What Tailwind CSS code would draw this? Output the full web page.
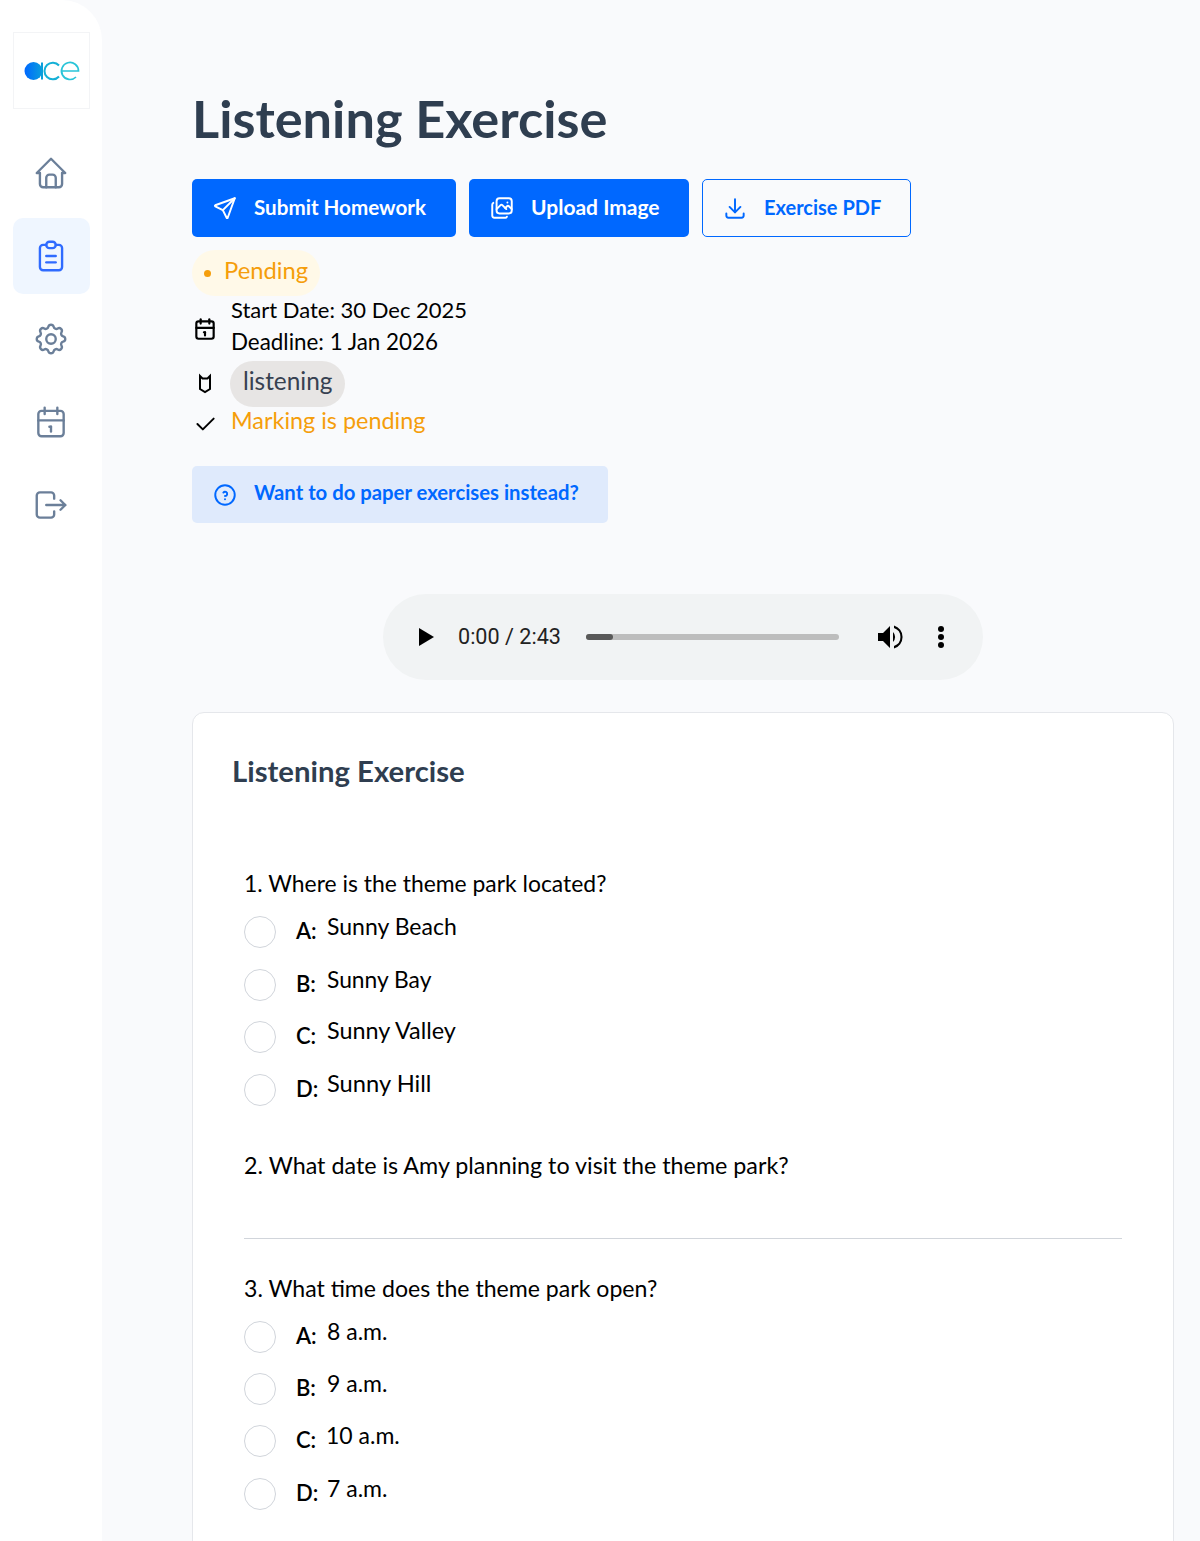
<!DOCTYPE html>
<html lang="en">

<head>
    <meta charset="utf-8">
    <meta name="viewport" content="width=device-width, initial-scale=1">
    <title>Listening Exercise</title>
    <script src="https://cdn.jsdelivr.net/npm/@tailwindcss/browser@4"></script>
</head>

<body class="h-[1541px] overflow-hidden bg-[#f9fafc] font-['Lato',sans-serif] text-black">
    <div class="flex h-full">
        <!-- Sidebar -->
        <aside class="w-[102px] shrink-0 bg-white rounded-tr-[40px] pt-8 pl-[13px] pr-[12px]">
            <div class="h-[77px] border border-[#f3f4f6] flex items-center justify-center">
                <svg width="56" height="22" viewBox="0 0 56 22" fill="none">
                    <defs>
                        <linearGradient id="logoA" x1="0" x2="1" y1="0" y2="0">
                            <stop offset="0" stop-color="#0068ff" />
                            <stop offset="1" stop-color="#0a9fdc" />
                        </linearGradient>
                    </defs>
                    <circle cx="9.500" cy="11" r="9" fill="url(#logoA)" />
                    <path d="M17 2.500h2v17h-2z" fill="#0a9fdc" />
                    <path d="M35 5.500a8.300 8.300 0 1 0 0 11" stroke="#14b0d6" stroke-width="2" />
                    <path d="M37 11h17.500a8.500 8.500 0 1 0 -2.500 6" stroke="#29c4d8" stroke-width="1.700" />
                </svg>
            </div>
            <nav class="mt-[26px] flex flex-col gap-[7px] text-[#6b7f99]">
                <a class="h-[76px] pr-px flex items-center justify-center">
                    <svg class="w-[38px] h-[38px]" viewBox="0 0 24 24" fill="none" stroke="currentColor" stroke-width="1.5" stroke-linecap="round" stroke-linejoin="round"><path d="M5 12l-2 0l9 -9l9 9l-2 0" /><path d="M5 12v7a2 2 0 0 0 2 2h10a2 2 0 0 0 2 -2v-7" /><path d="M9 21v-6a2 2 0 0 1 2 -2h2a2 2 0 0 1 2 2v6" /></svg>
                </a>
                <a class="h-[76px] pr-px flex items-center justify-center rounded-[10px] bg-[#eff6ff] text-[#2f6bff]">
                    <svg class="w-[38px] h-[38px]" viewBox="0 0 24 24" fill="none" stroke="currentColor" stroke-width="1.5" stroke-linecap="round" stroke-linejoin="round"><path d="M9 5h-2a2 2 0 0 0 -2 2v12a2 2 0 0 0 2 2h10a2 2 0 0 0 2 -2v-12a2 2 0 0 0 -2 -2h-2" /><path d="M9 5a2 2 0 0 1 2 -2h2a2 2 0 0 1 2 2v0a2 2 0 0 1 -2 2h-2a2 2 0 0 1 -2 -2z" /><path d="M9 12h6" /><path d="M9 16h6" /></svg>
                </a>
                <a class="h-[76px] pr-px flex items-center justify-center">
                    <svg class="w-[38px] h-[38px]" viewBox="0 0 24 24" fill="none" stroke="currentColor" stroke-width="1.5" stroke-linecap="round" stroke-linejoin="round"><path d="M10.325 4.317c.426 -1.756 2.924 -1.756 3.35 0a1.724 1.724 0 0 0 2.573 1.066c1.543 -.94 3.31 .826 2.37 2.37a1.724 1.724 0 0 0 1.065 2.572c1.756 .426 1.756 2.924 0 3.35a1.724 1.724 0 0 0 -1.066 2.573c.94 1.543 -.826 3.31 -2.37 2.37a1.724 1.724 0 0 0 -2.572 1.065c-.426 1.756 -2.924 1.756 -3.35 0a1.724 1.724 0 0 0 -2.573 -1.066c-1.543 .94 -3.31 -.826 -2.37 -2.37a1.724 1.724 0 0 0 -1.065 -2.572c-1.756 -.426 -1.756 -2.924 0 -3.35a1.724 1.724 0 0 0 1.066 -2.573c-.94 -1.543 .826 -3.31 2.37 -2.37c1 .608 2.296 .07 2.572 -1.065z" /><path d="M9 12a3 3 0 1 0 6 0a3 3 0 0 0 -6 0" /></svg>
                </a>
                <a class="h-[76px] pr-px flex items-center justify-center">
                    <svg class="w-[38px] h-[38px]" viewBox="0 0 24 24" fill="none" stroke="currentColor" stroke-width="1.5" stroke-linecap="round" stroke-linejoin="round"><path d="M4 7a2 2 0 0 1 2 -2h12a2 2 0 0 1 2 2v12a2 2 0 0 1 -2 2h-12a2 2 0 0 1 -2 -2z" /><path d="M16 3v4" /><path d="M8 3v4" /><path d="M4 11h16" /><path d="M11 15h1" /><path d="M12 15v3" /></svg>
                </a>
                <a class="h-[76px] pr-px flex items-center justify-center">
                    <svg class="w-[38px] h-[38px]" viewBox="0 0 24 24" fill="none" stroke="currentColor" stroke-width="1.5" stroke-linecap="round" stroke-linejoin="round"><path d="M14 8v-2a2 2 0 0 0 -2 -2h-7a2 2 0 0 0 -2 2v12a2 2 0 0 0 2 2h7a2 2 0 0 0 2 -2v-2" /><path d="M9 12h12l-3 -3" /><path d="M18 15l3 -3" /></svg>
                </a>
            </nav>
        </aside>

        <!-- Main -->
        <main class="flex-1 min-w-0 pl-[90px] pr-[26px] pt-[88px]">
            <h1 class="h-[64px] leading-[60px] text-[52.3px] font-bold text-[#2f3e50]">Listening Exercise</h1>

            <div class="mt-[27px] flex gap-[13px] font-bold">
                <button class="w-[264px] h-[58px] bg-[#0068ff] text-white text-[20.6px] rounded-[5px] flex items-center pl-[20px] gap-[16px]">
                    <svg class="w-[26px] h-[26px]" viewBox="0 0 24 24" fill="none" stroke="currentColor" stroke-width="1.8" stroke-linecap="round" stroke-linejoin="round"><path d="M10 14l11 -11" /><path d="M21 3l-6.500 18a.55 .55 0 0 1 -1 0l-3.500 -7l-7 -3.500a.55 .55 0 0 1 0 -1l18 -6.500" /></svg>
                    <span class="pb-[2px]">Submit Homework</span>
                </button>
                <button class="w-[220px] h-[58px] bg-[#0068ff] text-white text-[21px] rounded-[5px] flex items-center pl-[20px] gap-[16px]">
                    <svg class="w-[26px] h-[26px]" viewBox="0 0 24 24" fill="none" stroke="currentColor" stroke-width="1.8" stroke-linecap="round" stroke-linejoin="round"><path d="M7 5.667a2.667 2.667 0 0 1 2.667 -2.667h8.666a2.667 2.667 0 0 1 2.667 2.667v8.666a2.667 2.667 0 0 1 -2.667 2.667h-8.666a2.667 2.667 0 0 1 -2.667 -2.667z" /><path d="M4.012 7.260a2.005 2.005 0 0 0 -1.012 1.737v10c0 1.100 .9 2 2 2h10c.75 0 1.158 -.385 1.500 -1" /><path d="M17 7h.01" /><path d="M7 13l3.644 -3.644a1.210 1.210 0 0 1 1.712 0l3.644 3.644" /><path d="M15 12l1.644 -1.644a1.210 1.210 0 0 1 1.712 0l2.644 2.644" /></svg>
                    <span class="pb-[2px]">Upload Image</span>
                </button>
                <button class="w-[209px] h-[58px] border border-[#0068ff] text-[#0068ff] text-[20px] rounded-[5px] flex items-center pl-[19px] gap-[16px]">
                    <svg class="w-[26px] h-[26px]" viewBox="0 0 24 24" fill="none" stroke="currentColor" stroke-width="1.8" stroke-linecap="round" stroke-linejoin="round"><path d="M4 17v2a2 2 0 0 0 2 2h12a2 2 0 0 0 2 -2v-2" /><path d="M7 11l5 5l5 -5" /><path d="M12 4l0 12" /></svg>
                    <span class="pb-[2px]">Exercise PDF</span>
                </button>
            </div>

            <div class="mt-[13px] w-[128px] h-[46px] rounded-full bg-[#fff9e8] flex items-center pl-[12px] text-[23.8px] text-[#f59e0b]">
                <span class="w-[7px] h-[7px] rounded-full bg-[#f59e0b] mr-[13px]"></span><span class="pb-[4px]">Pending</span>
            </div>

            <div class="-mt-[2px] flex items-center leading-[32px]">
                <svg class="w-[26px] h-[26px] shrink-0 mr-[13px] mt-[5px]" viewBox="0 0 24 24" fill="none" stroke="currentColor" stroke-width="2" stroke-linecap="round" stroke-linejoin="round"><path d="M4 7a2 2 0 0 1 2 -2h12a2 2 0 0 1 2 2v12a2 2 0 0 1 -2 2h-12a2 2 0 0 1 -2 -2z" /><path d="M16 3v4" /><path d="M8 3v4" /><path d="M4 11h16" /><path d="M11 15h1" /><path d="M12 15v3" /></svg>
                <div>
                    <p class="text-[22px]">Start Date: 30 Dec 2025</p>
                    <p class="text-[22.4px]">Deadline: 1 Jan 2026</p>
                </div>
            </div>

            <div class="mt-[3px] flex items-center">
                <svg class="w-[26px] h-[26px] shrink-0 mr-[12px] mb-[2px]" viewBox="0 0 26 26" fill="none" stroke="currentColor" stroke-width="2"><path d="M8 6l2.500 2.500h5l2.500 -2.500v13l-5 3l-5 -3z" /></svg>
                <span class="h-[46px] w-[115px] pl-[13px] rounded-full bg-[#e7e5e4] text-[#374151] text-[24.4px] flex items-center"><span class="pb-[5px]">listening</span></span>
            </div>

            <div class="-mt-[2px] h-[32px] flex items-center text-[23.4px] leading-[32px] text-[#f59e0b]">
                <svg class="w-[26px] h-[26px] shrink-0 mr-[13px] mt-[5px] text-black" viewBox="0 0 24 24" fill="none" stroke="currentColor" stroke-width="1.8" stroke-linecap="round" stroke-linejoin="round"><path d="M5 12l5 5l10 -10" /></svg>
                <span class="pb-[2px]">Marking is pending</span>
            </div>

            <button class="mt-[29px] w-[416px] h-[57px] rounded-[5px] bg-[#dfeafc] text-[#0068ff] text-[20.3px] font-bold flex items-center pl-[20px] gap-[16px]">
                <svg class="w-[26px] h-[26px]" viewBox="0 0 24 24" fill="none" stroke="currentColor" stroke-width="1.8" stroke-linecap="round" stroke-linejoin="round"><path d="M3 12a9 9 0 1 0 18 0a9 9 0 1 0 -18 0" /><path d="M12 16v.01" /><path d="M12 13a2 2 0 0 0 .914 -3.782a1.980 1.980 0 0 0 -2.414 .483" /></svg>
                <span class="pb-[5px]">Want to do paper exercises instead?</span>
            </button>

            <!-- Audio player -->
            <div class="mt-[71px] mx-auto w-[600px] h-[86px] rounded-full bg-[#f1f3f4] flex items-center relative">
                <svg class="ml-[32px] w-[22px] h-[22px]" viewBox="0 0 22 22" fill="black"><path d="M4 2l15 9l-15 9z" /></svg>
                <span class="ml-[21px] font-['Roboto',sans-serif] text-[21.6px] text-[#222]">0:00 / 2:43</span>
                <div class="ml-[25px] w-[253px] h-[6px] rounded-full bg-[#bdbdbd]">
                    <div class="w-[27px] h-[6px] rounded-full bg-[#595959]"></div>
                </div>
                <svg class="ml-[38px] w-[26px] h-[26px]" viewBox="0 0 26 26" fill="black"><path d="M1 9h5l7 -7v22l-7 -7h-5z" /><path d="M16 8a7 7 0 0 1 0 10z" /><path d="M17 1.500a12 12 0 0 1 0 23v-2.500a9.500 9.500 0 0 0 0 -18z" /></svg>
                <svg class="ml-[34px] w-[8px] h-[24px]" viewBox="0 0 8 24" fill="black"><circle cx="4" cy="4" r="3" /><circle cx="4" cy="12" r="3" /><circle cx="4" cy="20" r="3" /></svg>
            </div>

            <!-- Exercise card -->
            <section class="mt-[32px] h-[900px] bg-white border border-[#e5e7eb] rounded-[12px] pt-[38px] px-[51px]">
                <h2 class="-ml-[12px] h-[41px] leading-[40px] text-[29.3px] font-bold text-[#2f3e50]">Listening Exercise</h2>

                <p class="mt-[75px] h-[33px] leading-[33px] text-[22.9px]">1. Where is the theme park located?</p>
                <div class="mt-[16px] h-[32px] flex items-center"><span class="w-8 h-8 rounded-full border border-[#d1d5db] bg-white"></span><span class="ml-[20px] w-[31px] pb-1 text-[22px] font-semibold">A:</span><span class="pb-3 text-[23px]">Sunny Beach</span></div>
                <div class="mt-[21px] h-[32px] flex items-center"><span class="w-8 h-8 rounded-full border border-[#d1d5db] bg-white"></span><span class="ml-[20px] w-[31px] pb-1 text-[22px] font-semibold">B:</span><span class="pb-3 text-[22.8px]">Sunny Bay</span></div>
                <div class="mt-[20px] h-[32px] flex items-center"><span class="w-8 h-8 rounded-full border border-[#d1d5db] bg-white"></span><span class="ml-[20px] w-[31px] pb-1 text-[22px] font-semibold">C:</span><span class="pb-3 text-[23.4px]">Sunny Valley</span></div>
                <div class="mt-[21px] h-[32px] flex items-center"><span class="w-8 h-8 rounded-full border border-[#d1d5db] bg-white"></span><span class="ml-[20px] w-[31px] pb-1 text-[22px] font-semibold">D:</span><span class="pb-3 text-[23.7px]">Sunny Hill</span></div>

                <p class="mt-[43px] h-[33px] leading-[33px] text-[23.3px]">2. What date is Amy planning to visit the theme park?</p>
                <div class="mt-[56px] border-t border-[#d1d5db]"></div>

                <p class="mt-[33px] h-[33px] leading-[33px] text-[23.1px]">3. What time does the theme park open?</p>
                <div class="mt-[16px] h-[32px] flex items-center"><span class="w-8 h-8 rounded-full border border-[#d1d5db] bg-white"></span><span class="ml-[20px] w-[31px] pb-1 text-[22px] font-semibold">A:</span><span class="pb-3 text-[23px]">8 a.m.</span></div>
                <div class="mt-[20px] h-[32px] flex items-center"><span class="w-8 h-8 rounded-full border border-[#d1d5db] bg-white"></span><span class="ml-[20px] w-[31px] pb-1 text-[22px] font-semibold">B:</span><span class="pb-3 text-[23px]">9 a.m.</span></div>
                <div class="mt-[20px] h-[32px] flex items-center"><span class="w-8 h-8 rounded-full border border-[#d1d5db] bg-white"></span><span class="ml-[20px] w-[31px] pb-1 text-[22px] font-semibold">C:</span><span class="pb-3 -ml-px text-[23px]">10 a.m.</span></div>
                <div class="mt-[21px] h-[32px] flex items-center"><span class="w-8 h-8 rounded-full border border-[#d1d5db] bg-white"></span><span class="ml-[20px] w-[31px] pb-1 text-[22px] font-semibold">D:</span><span class="pb-3 text-[23px]">7 a.m.</span></div>
            </section>
        </main>
    </div>
</body>

</html>
